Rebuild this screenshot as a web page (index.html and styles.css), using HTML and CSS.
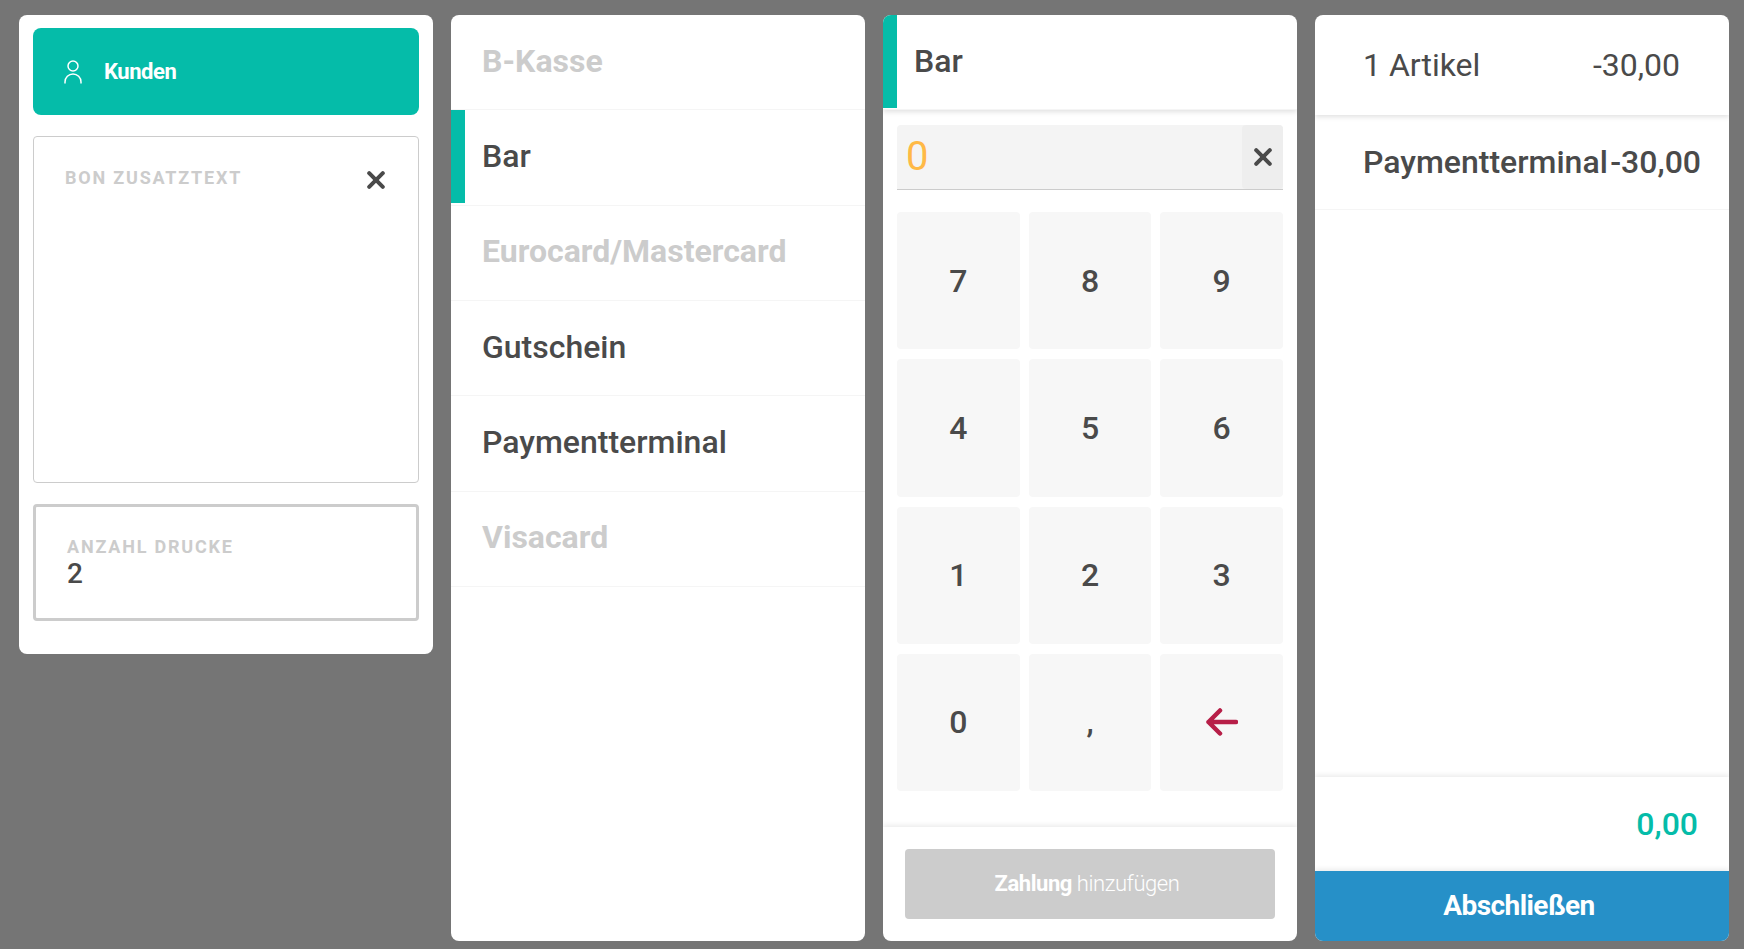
FILE: index.html
```html
<!DOCTYPE html>
<html lang="de">
<head>
  <meta charset="UTF-8">
  <meta name="viewport" content="width=device-width, initial-scale=1.0">
  <title>Kasse - Zahlung</title>
  <link rel="stylesheet" href="styles.css">
</head>
<body>
  <main class="checkout">

    <section class="panel options">
      <button class="customer-btn" type="button">
        <svg class="icon-user" viewBox="0 0 18 24" fill="none" stroke="currentColor" stroke-width="1.5">
          <circle cx="9" cy="6" r="5"/>
          <path d="M1 23.500V22a8 8 0 0 1 16 0v1.500"/>
        </svg>
        <span>Kunden</span>
      </button>

      <div class="note">
        <div class="note-head">
          <label class="caption" for="note-text">Bon Zusatztext</label>
          <button class="icon-btn" type="button" aria-label="Text löschen">
            <svg class="icon-x" viewBox="0 0 18 18"><path d="M2.200 2.200l13.600 13.600M15.800 2.200L2.200 15.800"/></svg>
          </button>
        </div>
        <textarea id="note-text"></textarea>
      </div>

      <div class="copies">
        <label class="caption" for="copies">Anzahl Drucke</label>
        <input id="copies" type="text" inputmode="numeric" value="2">
      </div>
    </section>

    <section class="panel">
      <div class="methods">
        <button class="method" type="button" disabled>B-Kasse</button>
        <button class="method active" type="button">Bar</button>
        <button class="method" type="button" disabled>Eurocard/Mastercard</button>
        <button class="method" type="button">Gutschein</button>
        <button class="method" type="button">Paymentterminal</button>
        <button class="method" type="button" disabled>Visacard</button>
      </div>
    </section>

    <section class="panel">
      <h2 class="pay-title">Bar</h2>
      <div class="pay-body">
        <div class="amount">
          <input id="amount" type="text" inputmode="decimal" placeholder="0" aria-label="Betrag">
          <button class="amount-clear" type="button" aria-label="Betrag löschen">
            <svg class="icon-x" viewBox="0 0 18 18"><path d="M2.200 2.200l13.600 13.600M15.800 2.200L2.200 15.800"/></svg>
          </button>
        </div>
        <div class="keypad">
          <button type="button">7</button>
          <button type="button">8</button>
          <button type="button">9</button>
          <button type="button">4</button>
          <button type="button">5</button>
          <button type="button">6</button>
          <button type="button">1</button>
          <button type="button">2</button>
          <button type="button">3</button>
          <button type="button">0</button>
          <button type="button">,</button>
          <button type="button" aria-label="Zurück">
            <svg class="icon-back" viewBox="0 0 32 28"><path d="M14 2.500L2.500 14 14 25.500M2.500 14H30"/></svg>
          </button>
        </div>
      </div>
      <div class="pay-footer">
        <button class="add-btn" type="button" disabled><b>Zahlung</b> hinzufügen</button>
      </div>
    </section>

    <section class="panel">
      <div class="summary-head">
        <span>1 Artikel</span>
        <span>-30,00</span>
      </div>
      <div class="summary-list">
        <div class="summary-row">
          <span>Paymentterminal</span>
          <span>-30,00</span>
        </div>
      </div>
      <div class="total">0,00</div>
      <button class="finish-btn" type="button">Abschließen</button>
    </section>

  </main>
</body>
</html>
```
FILE: styles.css
```css
* {
  box-sizing: border-box;
}
body {
  margin: 0;
  background: #757575;
  color: #4a4a4a;
  font-family: Roboto, "Liberation Sans", sans-serif;
  font-size: 32px;
}
button, input, textarea {
  font: inherit;
  color: inherit;
  border: 0;
  padding: 0;
  background: none;
  outline: none;
}
button {
  cursor: pointer;
}
svg {
  display: block;
}

.checkout {
  display: grid;
  grid-template-columns: repeat(4, 1fr);
  grid-template-rows: 1fr;
  gap: 18px;
  height: 100vh;
  padding: 15px 15px 8px 19px;
}
.panel {
  display: flex;
  flex-direction: column;
  min-width: 0;
  background: #fff;
  border-radius: 8px;
  overflow: hidden;
}

/* icons */
.icon-user {
  width: 18px;
  height: 24px;
}
.icon-x {
  width: 18px;
  height: 18px;
  fill: none;
  stroke: #4a4a4a;
  stroke-width: 4;
  stroke-linecap: round;
}
.icon-back {
  width: 32px;
  height: 28px;
  fill: none;
  stroke: #b71f48;
  stroke-width: 4.500;
  stroke-linecap: round;
  stroke-linejoin: round;
}

/* customer, receipt text, number of copies */
.options {
  align-self: start;
  gap: 21px;
  padding: 13px 14px 33px;
}
.customer-btn {
  display: flex;
  align-items: center;
  gap: 22px;
  height: 87px;
  padding: 0 31px;
  border-radius: 8px;
  background: #05bca9;
  color: #fff;
  font-size: 22px;
  font-weight: 700;
  letter-spacing: -0.02em;
}
.caption {
  color: #ccc;
  font-size: 18px;
  font-weight: 700;
  line-height: 21px;
  letter-spacing: 0.1em;
  text-transform: uppercase;
}
.note {
  display: flex;
  flex-direction: column;
  height: 347px;
  padding: 30px 33px 30px 31px;
  border: 1px solid #ccc;
  border-radius: 4px;
}
.note-head {
  display: flex;
  justify-content: space-between;
}
.icon-btn {
  padding-top: 4px;
}
.note textarea {
  flex: 1;
  resize: none;
  font-size: 28px;
}
.copies {
  display: flex;
  flex-direction: column;
  padding: 29px 31px;
  border: 3px solid #ccc;
  border-radius: 4px;
}
.copies input {
  width: 100%;
  height: 32px;
  font-size: 28px;
  font-weight: 500;
}

/* payment methods */
.methods {
  display: grid;
  grid-auto-rows: 1fr;
  height: 572px;
}
.method {
  padding: 0 31px 3px;
  border-bottom: 1px solid #f5f5f5;
  text-align: left;
  font-weight: 500;
}
.method:disabled {
  color: #ccc;
  font-weight: 700;
}
.method.active {
  background: linear-gradient(#05bca9, #05bca9) no-repeat 0 0 / 14px 93px;
}

/* amount and keypad */
.pay-title {
  flex: none;
  height: 95px;
  margin: 0;
  padding: 0 31px;
  border-bottom: 1px solid #f5f5f5;
  background: linear-gradient(#05bca9, #05bca9) no-repeat 0 0 / 14px 93px;
  box-shadow: 0 2px 5px rgba(0, 0, 0, 0.12);
  font-size: 32px;
  font-weight: 500;
  line-height: 93px;
}
.pay-body {
  flex: 1;
  display: flex;
  flex-direction: column;
  gap: 22px;
  padding: 15px 14px 36px;
}
.amount {
  display: flex;
  height: 65px;
  border-bottom: 1px solid #ccc;
  border-radius: 4px 4px 0 0;
  background: #f4f4f4;
}
.amount input {
  flex: 1;
  min-width: 0;
  padding: 0 9px 2px;
  font-size: 40px;
}
.amount input::placeholder {
  color: #ffb946;
}
.amount-clear {
  display: grid;
  place-items: center;
  width: 41px;
  padding-bottom: 1px;
  border-radius: 4px;
  background: #eee;
}
.keypad {
  flex: 1;
  display: grid;
  grid-template-columns: repeat(3, 1fr);
  grid-template-rows: repeat(4, 1fr);
  gap: 10px 9px;
}
.keypad button {
  display: grid;
  place-items: center;
  border-radius: 4px;
  background: #f7f7f7;
  font-weight: 500;
}
.pay-footer {
  padding: 22px;
  box-shadow: 0 -2px 5px rgba(0, 0, 0, 0.08);
}
.add-btn {
  display: block;
  width: 100%;
  height: 70px;
  padding: 0 6px 2px 0;
  border-radius: 4px;
  background: #ccc;
  color: #fff;
  font-size: 22px;
  font-weight: 300;
  letter-spacing: -0.02em;
}
.add-btn b {
  font-weight: 700;
}

/* summary */
.summary-head {
  display: flex;
  align-items: center;
  justify-content: space-between;
  height: 100px;
  padding: 0 49px 0 48px;
  box-shadow: 0 2px 5px rgba(0, 0, 0, 0.12);
}
.summary-list {
  flex: 1;
}
.summary-row {
  display: flex;
  align-items: center;
  justify-content: space-between;
  height: 95px;
  padding: 0 28px 1px 48px;
  border-bottom: 1px solid #f5f5f5;
  font-weight: 500;
}
.total {
  height: 94px;
  padding: 0 31px;
  box-shadow: 0 -2px 5px rgba(0, 0, 0, 0.08);
  color: #05bca9;
  font-weight: 500;
  line-height: 94px;
  text-align: right;
}
.finish-btn {
  height: 70px;
  padding: 0 6px 2px 0;
  background: #2690c8;
  box-shadow: 0 -2px 5px rgba(0, 0, 0, 0.08);
  color: #fff;
  font-size: 28px;
  font-weight: 700;
  letter-spacing: -0.02em;
}
```
